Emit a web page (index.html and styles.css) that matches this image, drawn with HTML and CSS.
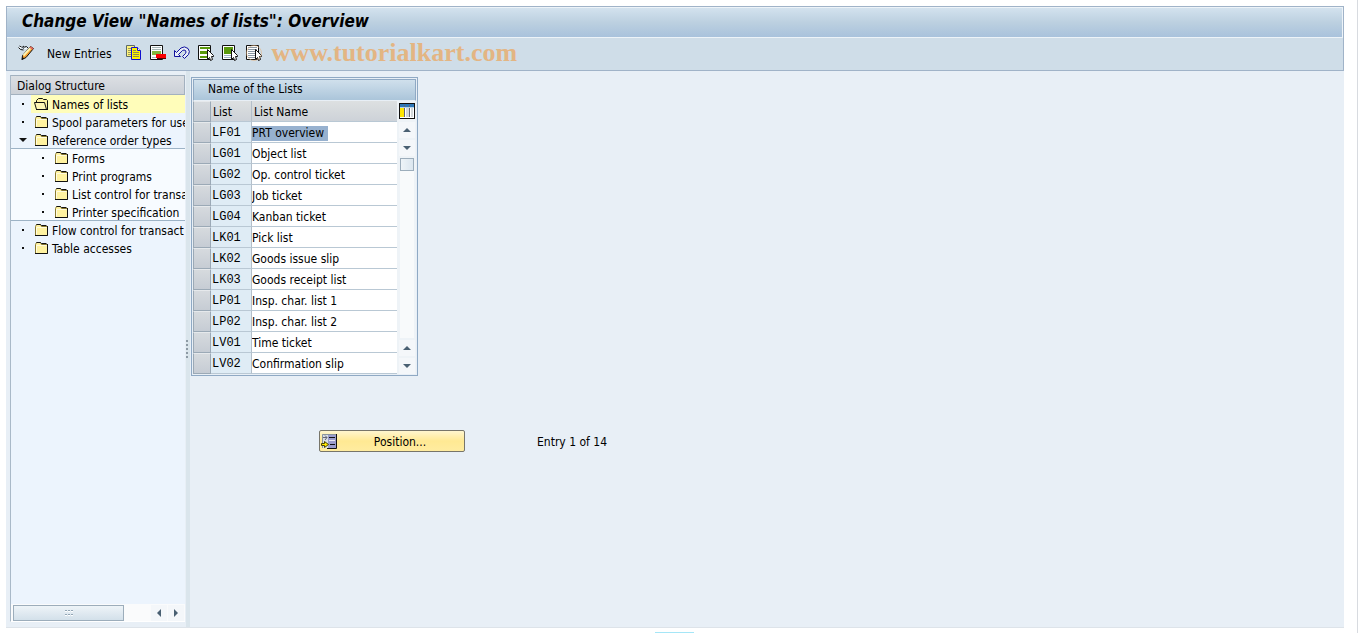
FILE: index.html
```html
<!DOCTYPE html>
<html lang="en">
<head>
    <meta charset="UTF-8">
    <title>Change View "Names of lists": Overview</title>
    <link rel="stylesheet" href="styles.css">
</head>
<body>
    <!-- Shared icons -->
    <svg class="sprite" aria-hidden="true">
        <symbol id="folder" viewBox="0 1 16 14">
            <path d="M1.5 3.5 L2.5 1.5 H6.5 L7.5 3.5 H13.5 V12.5 H1.5 Z" fill="#fff2a0" stroke="#8a7a30"/>
            <path d="M2.5 1.5 H6.5 L7.5 2.5 H12.5 M13.5 3 V12.5 H1" fill="none" stroke="#111"/>
            <path d="M2.5 11.5 V4.5 H12.5" fill="none" stroke="#fffbe0"/>
        </symbol>
        <symbol id="folder-open" viewBox="0 1 16 14">
            <path d="M2.5 5.5 V3.5 L4.5 1.5 H8.5 L9.5 2.5 H12.5 L13.5 3.5 V12.5" fill="#fff2a0" stroke="#111"/>
            <path d="M0.5 5.5 H10.5 L12.5 12.5 H2.5 Z" fill="#fff6b4" stroke="#111"/>
            <path d="M2 12.5 H14" fill="none" stroke="#111"/>
        </symbol>
        <symbol id="cursor" viewBox="0 0 16 16">
            <path d="M9.5 4.5 V14.5 L11.5 12.5 L12.5 15.5 L14.5 14.5 L13.5 11.5 H15.5 V10.5 Z" fill="#fff" stroke="#111"/>
        </symbol>
    </svg>

    <div class="window">
        <header class="app-header">
            <h1>Change View "Names of lists": Overview</h1>
            <div class="toolbar">
                <button type="button" class="icon-btn" aria-label="Display/Change">
                    <svg width="16" height="16" viewBox="0 0 16 16">
                        <path d="M0.5 2.5 L2.5 4.5 L5.5 5 M1.5 1 L4 2.5 L6 1 M5 3.5 Q6.5 1.5 8.5 1.5 L10 3" fill="none" stroke="#111"/>
                        <path d="M1.5 2.5 H3.5 M6.5 3.5 H8.5" stroke="#fff"/>
                        <path d="M12.5 1.5 L15.5 3.5 L8 12.5 L4 14.5 L4.5 10.5 Z" fill="#f5a030" stroke="#111"/>
                        <path d="M5.5 10.5 L12.5 3" stroke="#fff3b0" stroke-width="2"/>
                        <path d="M12 2 L15 4" stroke="#e06a5a" stroke-width="2"/>
                        <path d="M3.5 15 L4.5 12 L6.5 13.5 Z" fill="#111"/>
                    </svg>
                </button>
                <button type="button" class="text-btn">New Entries</button>
                <button type="button" class="icon-btn" aria-label="Copy As">
                    <svg width="16" height="16" viewBox="0 0 16 16">
                        <path d="M0.5 0.5 H8.5 V11.5 H0.5 Z" fill="#fff27a" stroke="#5c6a6a"/>
                        <path d="M2 3.5 H5 M2 5.5 H5 M2 7.5 H5 M2 9.5 H5" stroke="#9a9a60"/>
                        <path d="M5.5 2.5 H11.5 L14.5 5.5 V14.5 H5.5 Z" fill="#fff200" stroke="#1010d0"/>
                        <path d="M11.5 2.5 V5.5 H14.5" fill="#fff" stroke="#1010d0"/>
                        <path d="M7 5.5 H10 M7 7.5 H13 M7 9.5 H13 M7 11.5 H13" stroke="#8c8c50"/>
                    </svg>
                </button>
                <button type="button" class="icon-btn" aria-label="Delete">
                    <svg width="16" height="16" viewBox="0 0 16 16">
                        <path d="M0.5 0.5 H12.5 V14.5 H0.5 Z" fill="#fff" stroke="#111"/>
                        <path d="M2 2.5 H11 M2 4.5 H11 M2 12.5 H11" stroke="#a8b8b8"/>
                        <path d="M2 6 H11 V10 H2 Z" fill="#86b83c"/>
                        <path d="M6 9 H16 V13 H6 Z" fill="#fa0000"/>
                        <path d="M7 13.5 H16" stroke="#500"/>
                    </svg>
                </button>
                <button type="button" class="icon-btn" aria-label="Undo Change">
                    <svg width="16" height="16" viewBox="0 0 16 16">
                        <path d="M0.5 5.5 V11.5 H6.5 L4.5 9.5 L8.5 5.5 Q10 4.5 11.5 5.5 Q12.5 7 11.5 8.5 L8.5 11.5 L10.5 13.5 L14.5 9.5 Q16.5 6.5 14 3.5 Q10.5 0.5 7 3 L2.5 7.5 Z" fill="#e8eef8" stroke="#10109c"/>
                    </svg>
                </button>
                <button type="button" class="icon-btn" aria-label="Select All">
                    <svg width="16" height="16" viewBox="0 0 16 16">
                        <path d="M0.5 0.5 H12.5 V14.5 H0.5 Z" fill="#fff" stroke="#111"/>
                        <path d="M2 2 H12 V4 H2 Z M2 6 H12 V9 H2 Z M2 11 H12 V13 H2 Z" fill="#5a9a0c"/>
                        <use href="#cursor"/>
                    </svg>
                </button>
                <button type="button" class="icon-btn" aria-label="Select Block">
                    <svg width="16" height="16" viewBox="0 0 16 16">
                        <path d="M0.5 0.5 H12.5 V14.5 H0.5 Z" fill="#fff" stroke="#111"/>
                        <path d="M2 2 H11 V9 H2 Z" fill="#5a9a0c"/>
                        <path d="M2 10.5 H9 M2 12.5 H9" stroke="#9fb4c4"/>
                        <use href="#cursor"/>
                    </svg>
                </button>
                <button type="button" class="icon-btn" aria-label="Deselect All">
                    <svg width="16" height="16" viewBox="0 0 16 16">
                        <path d="M0.5 0.5 H12.5 V14.5 H0.5 Z" fill="#fff" stroke="#111"/>
                        <path d="M2 2.5 H11 M2 4.5 H11 M2 6.5 H11 M2 8.5 H9 M2 10.5 H9 M2 12.5 H9" stroke="#8a98a4"/>
                        <use href="#cursor"/>
                        <circle cx="8" cy="8" r="7.5" fill="none" stroke="#e3b583" stroke-opacity=".6"/>
                    </svg>
                </button>
                <span class="site-name">www.tutorialkart.com</span>
            </div>
        </header>

        <div class="workspace">
            <nav class="dialog-tree">
                <h2>Dialog Structure</h2>
                <ul class="tree">
                    <li class="node active"><span class="dot"></span><a href="#"><svg width="16" height="14"><use href="#folder-open"/></svg>Names of lists</a></li>
                    <li class="node"><span class="dot"></span><a href="#"><svg width="16" height="14"><use href="#folder"/></svg>Spool parameters for use</a></li>
                    <li class="branch">
                        <div class="node"><span class="arrow"></span><a href="#"><svg width="16" height="14"><use href="#folder"/></svg>Reference order types</a></div>
                        <ul class="subtree">
                            <li class="node"><span class="dot"></span><a href="#"><svg width="16" height="14"><use href="#folder"/></svg>Forms</a></li>
                            <li class="node"><span class="dot"></span><a href="#"><svg width="16" height="14"><use href="#folder"/></svg>Print programs</a></li>
                            <li class="node"><span class="dot"></span><a href="#"><svg width="16" height="14"><use href="#folder"/></svg>List control for transa</a></li>
                            <li class="node"><span class="dot"></span><a href="#"><svg width="16" height="14"><use href="#folder"/></svg>Printer specification</a></li>
                        </ul>
                    </li>
                    <li class="node"><span class="dot"></span><a href="#"><svg width="16" height="14"><use href="#folder"/></svg>Flow control for transact</a></li>
                    <li class="node"><span class="dot"></span><a href="#"><svg width="16" height="14"><use href="#folder"/></svg>Table accesses</a></li>
                </ul>
                <div class="h-scroll">
                    <div class="h-thumb"><svg width="10" height="8"><path d="M1 1.5h2M4 1.5h2M7 1.5h2M1 5.5h2M4 5.5h2M7 5.5h2" stroke="#93a6b5"/><path d="M1 2.5h2M4 2.5h2M7 2.5h2M1 6.5h2M4 6.5h2M7 6.5h2" stroke="#fff"/></svg></div>
                    <button type="button" class="scroll-btn" aria-label="Scroll left"><svg width="10" height="10"><path d="M7 1 V9 L3 5 Z"/></svg></button>
                    <button type="button" class="scroll-btn" aria-label="Scroll right"><svg width="10" height="10"><path d="M3 1 V9 L7 5 Z"/></svg></button>
                </div>
            </nav>

            <div class="splitter">
                <svg width="4" height="20"><path d="M1 1 V20" stroke="#8d9aa5" stroke-width="2" stroke-dasharray="2 2"/></svg>
            </div>

            <main>
                <section class="list-box">
                    <h2>Name of the Lists</h2>
                    <div class="list-body">
                        <table>
                            <thead>
                                <tr><th class="pick"></th><th class="code">List</th><th class="name">List Name</th></tr>
                            </thead>
                            <tbody>
                                <tr><td class="pick"></td><td class="code">LF01</td><td class="name"><input class="marked" type="text" aria-label="List name LF01" value="PRT overview"></td></tr>
                                <tr><td class="pick"></td><td class="code">LG01</td><td class="name"><input type="text" aria-label="List name LG01" value="Object list"></td></tr>
                                <tr><td class="pick"></td><td class="code">LG02</td><td class="name"><input type="text" aria-label="List name LG02" value="Op. control ticket"></td></tr>
                                <tr><td class="pick"></td><td class="code">LG03</td><td class="name"><input type="text" aria-label="List name LG03" value="Job ticket"></td></tr>
                                <tr><td class="pick"></td><td class="code">LG04</td><td class="name"><input type="text" aria-label="List name LG04" value="Kanban ticket"></td></tr>
                                <tr><td class="pick"></td><td class="code">LK01</td><td class="name"><input type="text" aria-label="List name LK01" value="Pick list"></td></tr>
                                <tr><td class="pick"></td><td class="code">LK02</td><td class="name"><input type="text" aria-label="List name LK02" value="Goods issue slip"></td></tr>
                                <tr><td class="pick"></td><td class="code">LK03</td><td class="name"><input type="text" aria-label="List name LK03" value="Goods receipt list"></td></tr>
                                <tr><td class="pick"></td><td class="code">LP01</td><td class="name"><input type="text" aria-label="List name LP01" value="Insp. char. list 1"></td></tr>
                                <tr><td class="pick"></td><td class="code">LP02</td><td class="name"><input type="text" aria-label="List name LP02" value="Insp. char. list 2"></td></tr>
                                <tr><td class="pick"></td><td class="code">LV01</td><td class="name"><input type="text" aria-label="List name LV01" value="Time ticket"></td></tr>
                                <tr><td class="pick"></td><td class="code">LV02</td><td class="name"><input type="text" aria-label="List name LV02" value="Confirmation slip"></td></tr>
                            </tbody>
                        </table>
                        <div class="v-scroll">
                            <button type="button" class="config-btn" aria-label="Table settings">
                                <svg width="16" height="16" viewBox="0 0 16 16">
                                    <rect width="16" height="16" fill="#111"/>
                                    <path d="M1 1H15V15H1Z" fill="#fff"/>
                                    <path d="M1 1H15V4H1Z" fill="#2f78b8"/>
                                    <path d="M1 5H5V14H1Z" fill="#ffe600"/>
                                    <path d="M7 5H10V14H7Z M12 5H14V14H12Z" fill="#d3d8da"/>
                                    <path d="M5.5 2V14M10.5 2V14" stroke="#667"/>
                                    <path d="M1 4.5H15" stroke="#b8d4ea"/>
                                </svg>
                            </button>
                            <button type="button" class="scroll-btn" aria-label="First"><svg width="10" height="10"><path d="M1 7 H9 L5 3 Z"/></svg></button>
                            <button type="button" class="scroll-btn" aria-label="Next"><svg width="10" height="10"><path d="M1 3 H9 L5 7 Z"/></svg></button>
                            <div class="v-track"><div class="v-thumb"></div></div>
                            <button type="button" class="scroll-btn" aria-label="Previous"><svg width="10" height="10"><path d="M1 7 H9 L5 3 Z"/></svg></button>
                            <button type="button" class="scroll-btn" aria-label="Last"><svg width="10" height="10"><path d="M1 3 H9 L5 7 Z"/></svg></button>
                        </div>
                    </div>
                </section>

                <div class="position-row">
                    <button type="button" class="position-btn">
                        <svg width="16" height="16" viewBox="0 0 16 16">
                            <path d="M1 1H15V15H1Z" fill="#d9dfe4"/>
                            <path d="M7 1H15V15H7Z" fill="#9a9ccc"/>
                            <path d="M1.5 15V1.5H15" fill="none" stroke="#8a949c"/>
                            <path d="M15.5 1V15.5H6" fill="none" stroke="#111"/>
                            <path d="M8 4.5H14M9 11.5H14" stroke="#111"/>
                            <path d="M8 7.5H14" stroke="#e8e8f4"/>
                            <path d="M2 4.5H6L4 2.5M6 4.5L4 7" fill="none" stroke="#667"/>
                            <path d="M0.5 10.5H3.5V8.5L7.5 11.5L3.5 14.5V12.5H0.5Z" fill="#ffe800" stroke="#4a4200"/>
                        </svg>
                        <span>Position...</span>
                    </button>
                    <span>Entry 1 of 14</span>
                </div>
            </main>
        </div>
    </div>
    <div class="page-mark"></div>
</body>
</html>
```
FILE: styles.css
```css
*,
*::before {
    box-sizing: border-box;
}

body {
    margin: 0;
    min-height: 100vh;
    display: flex;
    flex-direction: column;
    padding: 6px 13px 5px 6px;
    background-color: #fff;
    border-right: 1px solid #d8dbe0;
    font-family: "DejaVu Sans Condensed", Tahoma, sans-serif;
    font-size: 12px;
    line-height: 18px;
    color: #000;
}

button,
input {
    font: inherit;
    color: inherit;
    border: none;
    padding: 0;
    margin: 0;
    background: none;
}

svg {
    display: block;
    flex: none;
}

h1,
h2,
ul {
    margin: 0;
    padding: 0;
    list-style: none;
}

h2 {
    font-size: 12px;
    font-weight: normal;
}

.sprite {
    position: absolute;
    width: 0;
    height: 0;
}

.window {
    flex: 1;
    display: flex;
    flex-direction: column;
    background-color: #e8eff6;
    border-bottom: 1px solid #dde3e9;
}

/* Title and toolbar */
.app-header {
    border: 1px solid #a0b3c8;
    background-color: #cfdde8;
}

.app-header h1 {
    height: 31px;
    padding-left: 15px;
    border: 1px solid #edf3f8;
    border-left: none;
    background: linear-gradient(#d3e2ee, #bcd0e0 50%, #a9c2dc);
    font-size: 17px;
    font-style: italic;
    line-height: 26px;
}

.toolbar {
    display: flex;
    align-items: center;
    gap: 8px;
    height: 32px;
    padding: 0 0 2px 11px;
}

.icon-btn {
    width: 16px;
    height: 16px;
}

.text-btn {
    padding: 2px 6px 0 5px;
}

.site-name {
    padding-left: 2px;
    font-family: "Liberation Serif", serif;
    font-size: 26px;
    font-weight: bold;
    line-height: 30px;
    color: #e3b583;
}

/* Navigation tree */
.workspace {
    flex: 1;
    display: flex;
}

.dialog-tree {
    display: flex;
    flex-direction: column;
    width: 175px;
    margin: 4px 1px 5px 4px;
    border-left: 1px solid #a9b9c8;
    border-bottom: 1px solid #fff;
    background-color: #ecf4fd;
    overflow: hidden;
}

.dialog-tree h2 {
    height: 20px;
    padding-left: 6px;
    border: 1px solid #a3b1bf;
    border-left: none;
    background: linear-gradient(#dcdfe3, #cbd0d7);
    line-height: 20px;
}

.tree {
    flex: 1;
}

.node {
    display: flex;
    align-items: center;
    height: 18px;
    white-space: nowrap;
}

.node a {
    flex: 1;
    display: flex;
    align-items: center;
    gap: 2px;
    height: 18px;
    padding: 2px 0 0 3px;
    color: #000;
    text-decoration: none;
}

.active a {
    background-color: #fffdba;
}

.dot,
.arrow {
    flex: none;
    width: 20px;
}

.dot::before {
    content: "";
    display: block;
    width: 2px;
    height: 2px;
    margin-left: 11px;
    background-color: #111;
}

.arrow::before {
    content: "";
    display: block;
    width: 8px;
    margin-left: 8px;
    border: 4px solid transparent;
    border-top-color: #111;
    border-bottom: none;
}

.branch > .node,
.subtree {
    border-bottom: 1px solid #9db3c6;
}

.subtree {
    height: 72px;
    background-color: #f7fbff;
}

.subtree .node {
    padding-left: 20px;
}

.scroll-btn {
    display: flex;
    align-items: center;
    justify-content: center;
    width: 16px;
    height: 16px;
    background-color: #f4f7fa;
    fill: #4a6072;
}

.h-scroll {
    display: flex;
    align-items: center;
    gap: 1px;
    height: 17px;
    padding: 0 1px 0 2px;
    background-color: #fafbfc;
}

.h-thumb {
    display: flex;
    align-items: center;
    justify-content: center;
    width: 111px;
    height: 16px;
    margin-right: auto;
    border: 1px solid #9cadbb;
    background: linear-gradient(#eef4f8, #d3e0ea);
}

.splitter {
    display: flex;
    align-items: center;
    width: 4px;
    background-color: #dae5ec;
}

/* Lists table */
main {
    flex: 1;
    padding: 6px 1px;
}

.list-box {
    width: fit-content;
    padding: 1px;
    border: 1px solid #8fa9c4;
    background-color: #e8eff6;
}

.list-box h2 {
    height: 22px;
    padding-left: 14px;
    border: 1px solid #8fa9c4;
    border-bottom-color: #e8eff6;
    background: linear-gradient(#d0e0ec, #abc5da);
    line-height: 18px;
}

.list-body {
    display: flex;
}

table {
    border-collapse: separate;
    border-spacing: 0;
}

th,
td {
    height: 21px;
    padding: 2px 0 0;
    font-weight: normal;
    text-align: left;
    line-height: 18px;
    border-bottom: 1px solid #b9c8d4;
    border-right: 1px solid #b4bfca;
}

th {
    padding-left: 2px;
    background: linear-gradient(#dde0e1, #cdd2d8);
}

.pick {
    width: 18px;
    background: linear-gradient(#d6dade, #c6ccd4);
    border: 1px solid #9ba9b6;
    border-top-color: #e6e9ec;
}

.code {
    width: 41px;
}

td.code {
    padding-left: 1px;
    background-color: #dfecf5;
    font-family: "Liberation Mono", monospace;
}

.name {
    width: 145px;
    border-right: none;
}

td.name {
    background-color: #fff;
}

td input {
    display: block;
    width: 100%;
    height: 15px;
}

td input.marked {
    width: 76px;
    background-color: #97b1cf;
}

.v-scroll {
    display: flex;
    flex-direction: column;
    align-items: center;
    gap: 2px;
    width: 19px;
    background-color: #eef3f7;
}

.config-btn {
    display: flex;
    align-items: center;
    justify-content: center;
    width: 19px;
    height: 19px;
}

.v-track {
    flex: 1;
    width: 14px;
    background-color: #f8fafb;
}

.v-thumb {
    height: 13px;
    border: 1px solid #9cadbb;
    background: linear-gradient(to right, #eef4f8, #dbe6ef);
}

.position-row {
    display: flex;
    align-items: center;
    gap: 72px;
    margin: 54px 0 0 128px;
}

.position-row span {
    padding-top: 2px;
}

.position-btn {
    display: flex;
    align-items: center;
    width: 146px;
    height: 22px;
    padding: 0 1px;
    border: 1px solid #77756a;
    border-radius: 2px;
    background: linear-gradient(#fff6cf, #ffe993 50%, #ffeca0);
}

.position-btn span {
    flex: 1;
    text-align: center;
}

.page-mark {
    position: fixed;
    left: 655px;
    bottom: 0;
    width: 39px;
    height: 1px;
    background-color: #a5e6f7;
}
```
